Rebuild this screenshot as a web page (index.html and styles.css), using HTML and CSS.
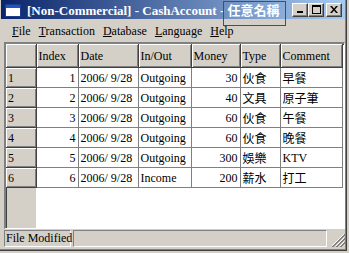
FILE: index.html
```html
<!DOCTYPE html>
<html lang="zh-Hant">
<head>
    <meta charset="UTF-8">
    <title>CashAccount</title>
    <link rel="stylesheet" href="styles.css">
</head>
<body>
    <div class="window">
        <div class="titlebar">
            <svg class="app-icon" width="16" height="13" viewBox="0 0 16 13">
                <rect x="0.5" y="0.5" width="15" height="12" fill="#fff" stroke="#1c3d8c"/>
                <rect x="1" y="1" width="14" height="3" fill="#1c55c8"/>
            </svg>
            <span class="title-text">[Non-Commercial] - CashAccount - 任意名稱</span>
            <div class="caption-buttons">
                <div class="cap-btn">
                    <svg width="8" height="7" viewBox="0 0 8 7"><rect x="1" y="5" width="6" height="2" fill="#000"/></svg>
                </div>
                <div class="cap-btn">
                    <svg width="9" height="9" viewBox="0 0 9 9"><rect x="0.5" y="0.5" width="8" height="8" fill="none" stroke="#000"/><rect x="0" y="0" width="9" height="2" fill="#000"/></svg>
                </div>
                <div class="cap-btn close">
                    <svg width="8" height="7" viewBox="0 0 8 7"><path d="M0 0h2l2 2.5 2-2.5h2l-3 3.5 3 3.5h-2l-2-2.5-2 2.5h-2l3-3.5z" fill="#000"/></svg>
                </div>
            </div>
        </div>
        <div class="name-mark"></div>

        <div class="menubar">
            <span class="menu-item"><u>F</u>ile</span>
            <span class="menu-item"><u>T</u>ransaction</span>
            <span class="menu-item"><u>D</u>atabase</span>
            <span class="menu-item"><u>L</u>anguage</span>
            <span class="menu-item"><u>H</u>elp</span>
        </div>

        <div class="grid">
            <table class="cash-table">
                <colgroup>
                    <col class="c-fixed">
                    <col class="c-index">
                    <col class="c-date">
                    <col class="c-inout">
                    <col class="c-money">
                    <col class="c-type">
                    <col class="c-comment">
                </colgroup>
                <tr class="head-row">
                    <th class="fixed"></th>
                    <th class="fixed">Index</th>
                    <th class="fixed">Date</th>
                    <th class="fixed">In/Out</th>
                    <th class="fixed">Money</th>
                    <th class="fixed">Type</th>
                    <th class="fixed">Comment</th>
                </tr>
                <tr>
                    <td class="fixed">1</td><td class="num">1</td><td>2006/ 9/28</td><td>Outgoing</td><td class="num">30</td><td class="cjk">伙食</td><td class="cjk">早餐</td>
                </tr>
                <tr>
                    <td class="fixed">2</td><td class="num">2</td><td>2006/ 9/28</td><td>Outgoing</td><td class="num">40</td><td class="cjk">文具</td><td class="cjk">原子筆</td>
                </tr>
                <tr>
                    <td class="fixed">3</td><td class="num">3</td><td>2006/ 9/28</td><td>Outgoing</td><td class="num">60</td><td class="cjk">伙食</td><td class="cjk">午餐</td>
                </tr>
                <tr>
                    <td class="fixed">4</td><td class="num">4</td><td>2006/ 9/28</td><td>Outgoing</td><td class="num">60</td><td class="cjk">伙食</td><td class="cjk">晚餐</td>
                </tr>
                <tr>
                    <td class="fixed">5</td><td class="num">5</td><td>2006/ 9/28</td><td>Outgoing</td><td class="num">300</td><td class="cjk">娛樂</td><td>KTV</td>
                </tr>
                <tr>
                    <td class="fixed">6</td><td class="num">6</td><td>2006/ 9/28</td><td>Income</td><td class="num">200</td><td class="cjk">薪水</td><td class="cjk">打工</td>
                </tr>
            </table>
        </div>

        <div class="statusbar">
            <div class="panel first">File Modified</div>
            <div class="panel rest"></div>
            <svg class="grip" width="14" height="14" viewBox="0 0 14 14">
                <path d="M13 1L1 13M13 5L5 13M13 9L9 13" stroke="#fff" stroke-width="1"/>
                <path d="M14 1L1 14M14 2L2 14M14 5L5 14M14 6L6 14M14 9L9 14M14 10L10 14" stroke="#808080" stroke-width="1"/>
            </svg>
        </div>
    </div>
</body>
</html>
```

FILE: styles.css
```css
body {
    margin: 0;
    padding: 0;
    background-color: #d4d0c8;
    font-family: "Liberation Serif", serif;
    font-size: 12px;
    color: #000;
}
.window {
    position: relative;
    width: 346px;
    height: 250px;
    background-color: #d4d0c8;
    border-right: 1px solid #404040;
    border-bottom: 1px solid #404040;
    box-shadow: inset -1px -1px 0 #808080;
}
.titlebar {
    display: flex;
    align-items: center;
    height: 19px;
    margin: 0 1px 0 1px;
    background: linear-gradient(to right, #0a246a, #a6caf0);
    color: #fff;
}
.app-icon {
    margin: 1px 6px 0 4px;
}
.title-text {
    font-family: "Liberation Serif", "Noto Sans CJK TC", serif;
    font-weight: bold;
    font-size: 13px;
    white-space: nowrap;
}
.caption-buttons {
    display: flex;
    margin-left: auto;
    margin-right: 3px;
}
.cap-btn {
    display: flex;
    align-items: center;
    justify-content: center;
    width: 14px;
    height: 12px;
    background-color: #d4d0c8;
    border-top: 1px solid #fff;
    border-left: 1px solid #fff;
    border-right: 1px solid #404040;
    border-bottom: 1px solid #404040;
    box-shadow: inset -1px -1px 0 #808080;
}
.cap-btn.close {
    margin-left: 2px;
}
.name-mark {
    position: absolute;
    left: 223px;
    top: 1px;
    width: 61px;
    height: 23px;
    border: 1px solid #e01010;
}
.menubar {
    display: flex;
    height: 20px;
    align-items: center;
    padding-left: 8px;
    padding-top: 2px;
}
.menu-item {
    padding: 0 4px;
    white-space: nowrap;
}
.grid {
    margin: 1px 0 0 4px;
    width: 338px;
    height: 184px;
    border-top: 2px solid #808080;
    border-left: 2px solid #808080;
    border-right: 1px solid #fff;
    border-bottom: 1px solid #fff;
    box-shadow: inset 1px 1px 0 #404040;
    background: linear-gradient(to right, #d4d0c8 30px, #fff 30px);
    overflow: hidden;
}
.cash-table {
    border-collapse: collapse;
    table-layout: fixed;
    width: 336px;
}
.c-fixed { width: 30px; }
.c-index { width: 42px; }
.c-date { width: 60px; }
.c-inout { width: 53px; }
.c-money { width: 49px; }
.c-type { width: 40px; }
.c-comment { width: 62px; }
.cash-table td,
.cash-table th {
    height: 19px;
    padding: 0 2px;
    border-right: 1px solid #808080;
    border-bottom: 1px solid #808080;
    background-color: #fff;
    font-weight: normal;
    text-align: left;
    white-space: nowrap;
    overflow: hidden;
    line-height: 18px;
}
.cash-table .fixed {
    background-color: #d4d0c8;
    border-right: 1px solid #404040;
    border-bottom: 1px solid #404040;
    box-shadow: inset 1px 1px 0 #fff, inset -1px -1px 0 #808080;
}
.head-row th {
    height: 23px;
}
.cash-table .num {
    text-align: right;
}
.cash-table .cjk {
    font-family: "Noto Sans CJK TC", sans-serif;
    font-size: 12px;
}
.statusbar {
    display: flex;
    align-items: flex-end;
    height: 17px;
    margin: 1px 0 0 4px;
}
.panel {
    height: 15px;
    line-height: 15px;
    border-top: 1px solid #808080;
    border-left: 1px solid #808080;
    border-right: 1px solid #fff;
    border-bottom: 1px solid #fff;
    white-space: nowrap;
}
.panel.first {
    width: 64px;
    padding-left: 1px;
}
.panel.rest {
    width: 252px;
    margin-left: 2px;
}
.grip {
    margin-left: auto;
    margin-right: 1px;
}
```
